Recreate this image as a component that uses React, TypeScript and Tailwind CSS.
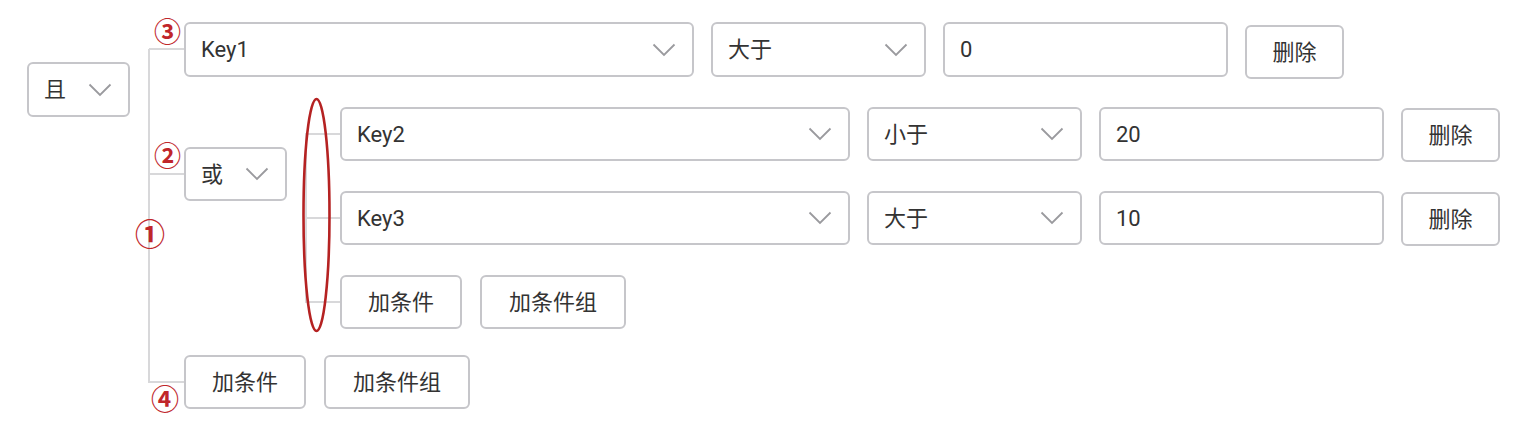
import React from "react";

const font = "font-['Roboto','Noto_Sans_CJK_SC',sans-serif]";

function Chevron() {
  return (
    <svg width="24" height="14" viewBox="0 0 24 14" fill="none" className="shrink-0">
      <path d="M1.5 1.5 L12 12 L22.5 1.5" stroke="#9a9a9e" strokeWidth="1.8" />
    </svg>
  );
}

function Select({ label, w, h = "h-[54px]" }: { label: string; w: string; h?: string }) {
  return (
    <div
      className={`${w} ${h} shrink-0 flex items-center justify-between pl-[15px] pr-[16px] border-2 border-[#c6c6ca] rounded-[6px] bg-white text-[22px] text-[#333333]`}
    >
      <span>{label}</span>
      <Chevron />
    </div>
  );
}

function Input({ value, h = "h-[54px]" }: { value: string; h?: string }) {
  return (
    <div
      className={`w-[285px] ${h} shrink-0 flex items-center pl-[15px] border-2 border-[#c6c6ca] rounded-[6px] bg-white text-[22px] text-[#333333]`}
    >
      {value}
    </div>
  );
}

function Button({ label, w }: { label: string; w: string }) {
  return (
    <div
      className={`${w} h-[54px] shrink-0 flex items-center justify-center border-2 border-[#c6c6ca] rounded-[6px] bg-white text-[22px] text-[#333333]`}
    >
      {label}
    </div>
  );
}

function HLine({ top, w }: { top: string; w: string }) {
  return <div className={`absolute ${top} ${w} h-[2px] bg-[#d8d8da] right-full`} />;
}

function ConditionRow({ k, op, v, h = "h-[54px]", shift }: { k: string; op: string; v: string; h?: string; shift: string }) {
  return (
    <div className="flex items-start gap-[17px]">
      <Select label={k} w="w-[510px]" h={h} />
      <Select label={op} w="w-[215px]" h={h} />
      <Input value={v} h={h} />
      <div className={`relative ${shift}`}>
        <Button label="删除" w="w-[99px]" />
      </div>
    </div>
  );
}

function AddButtons() {
  return (
    <div className="flex gap-[18px]">
      <Button label="加条件" w="w-[122px]" />
      <Button label="加条件组" w="w-[146px]" />
    </div>
  );
}

const mark = "absolute text-[#c0262a] font-['Noto_Sans_CJK_SC',sans-serif] font-bold leading-none";

export default function App() {
  return (
    <div className={`relative w-[1528px] h-[436px] bg-white overflow-hidden ${font}`}>
      <div className="flex items-start pl-[27px] pt-[22px]">
        {/* root selector */}
        <div className="mt-[40px]">
          <Select label="且" w="w-[103px]" h="h-[55px]" />
        </div>

        {/* outer group */}
        <div className="relative ml-[18px] pl-[36px]">
          <div className="absolute left-0 top-[27px] bottom-[26px] w-[2px] bg-[#d8d8da]" />

          <div className="relative">
            <HLine top="top-[26px]" w="w-[35px]" />
            <ConditionRow k="Key1" op="大于" v="0" h="h-[55px]" shift="top-[3px]" />
          </div>

          {/* nested group */}
          <div className="relative mt-[30px] flex items-start">
            <HLine top="top-[66px]" w="w-[35px]" />
            <div className="mt-[40px]">
              <Select label="或" w="w-[103px]" />
            </div>
            <div className="relative ml-[18px] pl-[35px] flex flex-col gap-[30px]">
              <div className="absolute left-0 top-[26px] bottom-[26px] w-[2px] bg-[#d8d8da]" />
              <div className="relative">
                <HLine top="top-[26px]" w="w-[35px]" />
                <ConditionRow k="Key2" op="小于" v="20" shift="top-[1px]" />
              </div>
              <div className="relative">
                <HLine top="top-[26px]" w="w-[35px]" />
                <ConditionRow k="Key3" op="大于" v="10" shift="top-[1px]" />
              </div>
              <div className="relative">
                <HLine top="top-[26px]" w="w-[35px]" />
                <AddButtons />
              </div>
            </div>
          </div>

          <div className="relative mt-[26px]">
            <HLine top="top-[26px]" w="w-[35px]" />
            <AddButtons />
          </div>
        </div>
      </div>

      {/* red annotations */}
      <span className={`${mark} left-[154px] top-[17px] text-[27px]`}>③</span>
      <span className={`${mark} left-[154px] top-[141px] text-[27px]`}>②</span>
      <span className={`${mark} left-[135px] top-[217px] text-[30px]`}>①</span>
      <span className={`${mark} left-[151px] top-[384px] text-[28px]`}>④</span>
      <svg className="absolute left-[300px] top-[97px]" width="34" height="237" viewBox="0 0 34 237">
        <ellipse cx="16.5" cy="118" rx="13" ry="116" fill="none" stroke="#b52222" strokeWidth="2.6" />
      </svg>
    </div>
  );
}
